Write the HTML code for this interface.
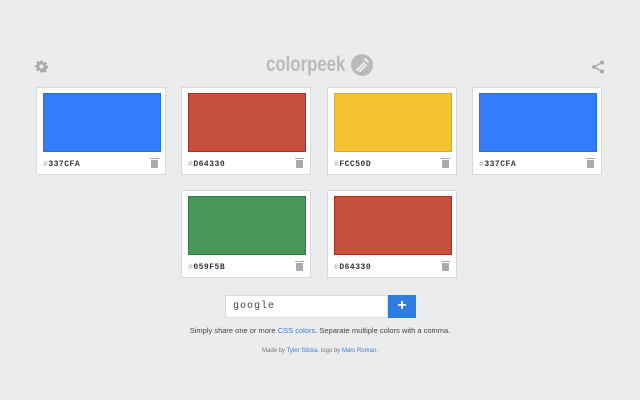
<!DOCTYPE html><html><head><style>
body{margin:0;width:640px;height:400px;background:#ebecee;font-family:"Liberation Sans",sans-serif;position:relative;overflow:hidden}
.card{position:absolute;width:130px;height:88px;background:#fff;border:1px solid #d8d9db;box-sizing:border-box}
.sw{position:absolute;left:6px;top:5px;width:118px;height:59px;box-sizing:border-box;border:1px solid rgba(0,0,0,.12)}
.lab{position:absolute;left:6px;top:72px;font:bold 8px "Liberation Mono",monospace;color:#333;letter-spacing:.5px}
.lab span{color:#aaa;font-weight:normal}
.tr{position:absolute;right:7px;top:72px;width:7px;height:8px;background:#aaa;border-radius:0 0 1px 1px}
.tr:before{content:"";position:absolute;left:-1px;top:-2px;width:9px;height:1px;background:#aaa}
.a{color:#3a7bd5}
</style></head><body>
<svg style="position:absolute;left:35px;top:60px" width="13" height="13" viewBox="0 0 24 24"><path fill="#aaa" d="M10 1h4l.6 3.2 2 .9 2.7-1.9 2.8 2.8-1.9 2.7.9 2 3.2.6v4l-3.2.6-.9 2 1.9 2.7-2.8 2.8-2.7-1.9-2 .9L14 23h-4l-.6-3.2-2-.9-2.7 1.9-2.8-2.8 1.9-2.7-.9-2L0 14v-4l3.2-.6.9-2L2.2 4.7 5 1.9l2.7 1.9 2-.9zM12 8a4 4 0 100 8 4 4 0 000-8z"/></svg>
<div style="position:absolute;left:266px;top:53px;font:bold 21px 'Liberation Sans',sans-serif;color:#b9babc;transform:scaleX(.8);transform-origin:0 0;white-space:nowrap">colorpeek</div>
<svg style="position:absolute;left:351px;top:54px" width="22" height="22" viewBox="0 0 22 22"><circle cx="11" cy="11" r="11" fill="#b9babc"/><path d="M6 16l7-7M9 17l6-6M14 5l3 3" stroke="#ebecee" stroke-width="2.2" stroke-linecap="round"/></svg>
<svg style="position:absolute;left:591px;top:60px" width="14" height="14" viewBox="0 0 14 14"><circle cx="11" cy="2.5" r="2" fill="#aaa"/><circle cx="3" cy="7" r="2" fill="#aaa"/><circle cx="11" cy="11.5" r="2" fill="#aaa"/><path d="M11 2.5L3 7l8 4.5" stroke="#aaa" fill="none" stroke-width="1.3"/></svg>

<div class="card" style="left:36px;top:87px"><div class="sw" style="background:#337CFA"></div><div class="lab"><span>#</span>337CFA</div><div class="tr"></div></div>
<div class="card" style="left:181px;top:87px"><div class="sw" style="background:#C64F3F;border-color:#b52a1c"></div><div class="lab"><span>#</span>D64330</div><div class="tr"></div></div>
<div class="card" style="left:327px;top:87px"><div class="sw" style="background:#F5C232"></div><div class="lab"><span>#</span>FCC50D</div><div class="tr"></div></div>
<div class="card" style="left:472px;top:87px"><div class="sw" style="background:#337CFA"></div><div class="lab"><span>#</span>337CFA</div><div class="tr"></div></div>
<div class="card" style="left:181px;top:190px"><div class="sw" style="background:#4A9558;border-color:#2f7f3c"></div><div class="lab"><span>#</span>059F5B</div><div class="tr"></div></div>
<div class="card" style="left:327px;top:190px"><div class="sw" style="background:#C64F3F;border-color:#b52a1c"></div><div class="lab"><span>#</span>D64330</div><div class="tr"></div></div>

<div style="position:absolute;left:225px;top:295px;width:163px;height:23px;background:#fff;box-sizing:border-box;border:1px solid #dcdcdc;font:10px 'Liberation Mono',monospace;color:#444;line-height:21px;padding-left:7px;letter-spacing:1px">google</div>
<div style="position:absolute;left:388px;top:295px;width:28px;height:23px;background:#2f7de0;color:#fff;font:bold 16px 'Liberation Sans';text-align:center;line-height:22px">+</div>
<div style="position:absolute;left:0;width:640px;top:326px;text-align:center;font-size:7.5px;color:#444">Simply share one or more <span class="a">CSS colors</span>. Separate multiple colors with a comma.</div>
<div style="position:absolute;left:0;width:640px;top:348px;text-align:center;font-size:6px;color:#777">Made by <span class="a">Tyler Sticka</span>, logo by <span class="a">Marc Roman</span>.</div>
</body></html>
